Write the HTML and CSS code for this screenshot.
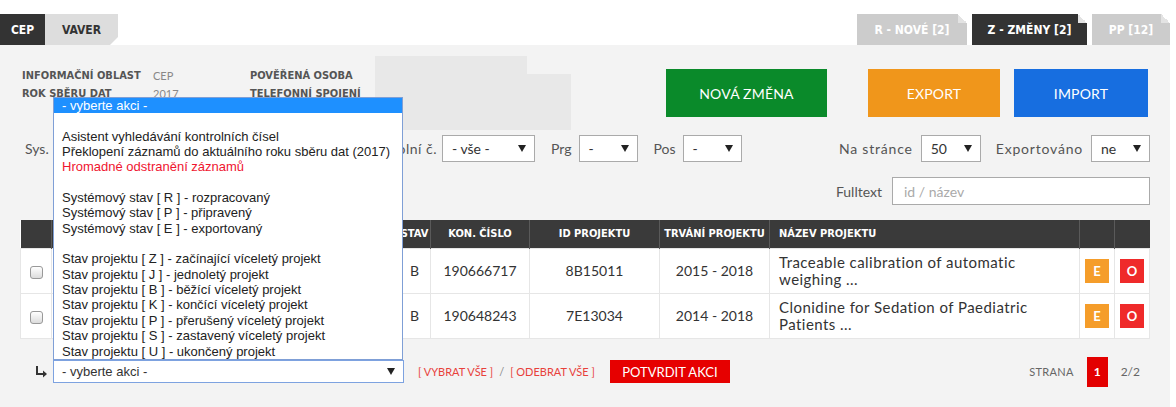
FILE: index.html
```html
<!DOCTYPE html>
<html lang="cs">
<head>
<meta charset="utf-8">
<title>CEP – změny</title>
<link rel="stylesheet" href="styles.css">
</head>
<body>
<div class="page">
  <div class="tabs">
    <div class="tabs-left">
      <div class="tab tab-cep">CEP</div>
      <div class="tab tab-vaver">VAVER</div>
    </div>
    <div class="tabs-right">
      <div class="ftab ftab-r">R - NOVÉ [2]</div>
      <div class="ftab ftab-active">Z - ZMĚNY [2]</div>
      <div class="ftab ftab-pp">PP [12]</div>
    </div>
  </div>

  <div class="panel">
    <div class="top">
      <div class="info">
        <span class="lbl">INFORMAČNÍ OBLAST</span><span class="val">CEP</span><span class="lbl">POVĚŘENÁ OSOBA</span>
        <span class="lbl">ROK SBĚRU DAT</span><span class="val">2017</span><span class="lbl">TELEFONNÍ SPOJENÍ</span>
      </div>
      <div class="redact"><div class="redact-a"></div><div class="redact-b"></div></div>
      <div class="actions">
        <div class="btn btn-green">NOVÁ ZMĚNA</div>
        <div class="btn btn-orange">EXPORT</div>
        <div class="btn btn-blue">IMPORT</div>
      </div>
    </div>

    <div class="filters">
      <div class="fl-left">
        <div class="sys-group"><span class="flabel">Sys.</span><div class="sel sel-sys"><i class="caret"></i></div></div>
        <div class="kc"><span class="flabel">Kontrolní č.</span></div>
        <div class="sel w93"><span>- vše -</span><i class="caret"></i></div>
        <span class="flabel ml16">Prg</span>
        <div class="sel w59"><span>-</span><i class="caret"></i></div>
        <span class="flabel ml16">Pos</span>
        <div class="sel w59"><span>-</span><i class="caret"></i></div>
      </div>
      <div class="fl-right">
        <span class="flabel wide">Na stránce</span>
        <div class="sel w60"><span>50</span><i class="caret"></i></div>
        <span class="flabel wide ml15">Exportováno</span>
        <div class="sel w59"><span>ne</span><i class="caret"></i></div>
      </div>
    </div>

    <div class="fulltext">
      <span class="flabel">Fulltext</span>
      <div class="input"><span class="ph">id / název</span></div>
    </div>

    <table class="grid">
      <colgroup>
        <col class="c-chk"><col class="c-h1"><col class="c-h2"><col class="c-stav"><col class="c-kon"><col class="c-id"><col class="c-tr"><col class="c-name"><col class="c-btn"><col class="c-btn">
      </colgroup>
      <thead>
        <tr>
          <th></th><th></th><th></th><th>STAV</th><th>KON. ČÍSLO</th><th>ID PROJEKTU</th><th>TRVÁNÍ PROJEKTU</th><th class="left">NÁZEV PROJEKTU</th><th></th><th></th>
        </tr>
      </thead>
      <tbody>
        <tr>
          <td><span class="chk"></span></td><td></td><td></td><td class="num">B</td><td class="num">190666717</td><td class="num">8B15011</td><td class="num">2015 - 2018</td>
          <td class="left name">Traceable calibration of automatic weighing ...</td>
          <td><span class="sq sq-e">E</span></td><td><span class="sq sq-o">O</span></td>
        </tr>
        <tr>
          <td><span class="chk"></span></td><td></td><td></td><td class="num">B</td><td class="num">190648243</td><td class="num">7E13034</td><td class="num">2014 - 2018</td>
          <td class="left name">Clonidine for Sedation of Paediatric Patients ...</td>
          <td><span class="sq sq-e">E</span></td><td><span class="sq sq-o">O</span></td>
        </tr>
      </tbody>
    </table>

    <div class="bottom">
      <svg class="hook" width="13" height="12" viewBox="0 0 13 12"><path d="M2 0 V8 H8" fill="none" stroke="#333" stroke-width="2"/><path d="M8 4.5 L12 8 L8 11.5 Z" fill="#333"/></svg>
      <div class="sel sel-action"><span>- vyberte akci -</span><i class="caret"></i></div>
      <span class="lnk">[ VYBRAT VŠE ]</span><span class="slash">/</span><span class="lnk">[ ODEBRAT VŠE ]</span>
      <div class="btn-confirm">POTVRDIT AKCI</div>
      <div class="pager">
        <span class="strana">STRANA</span>
        <span class="pg-cur">1</span>
        <span class="pg-tot">2/2</span>
      </div>
    </div>

    <ul class="dropdown">
      <li class="opt hl">- vyberte akci -</li>
      <li class="opt"></li>
      <li class="opt">Asistent vyhledávání kontrolních čísel</li>
      <li class="opt">Překlopení záznamů do aktuálního roku sběru dat (2017)</li>
      <li class="opt red">Hromadné odstranění záznamů</li>
      <li class="opt"></li>
      <li class="opt">Systémový stav [ R ] - rozpracovaný</li>
      <li class="opt">Systémový stav [ P ] - připravený</li>
      <li class="opt">Systémový stav [ E ] - exportovaný</li>
      <li class="opt"></li>
      <li class="opt">Stav projektu [ Z ] - začínající víceletý projekt</li>
      <li class="opt">Stav projektu [ J ] - jednoletý projekt</li>
      <li class="opt">Stav projektu [ B ] - běžící víceletý projekt</li>
      <li class="opt">Stav projektu [ K ] - končící víceletý projekt</li>
      <li class="opt">Stav projektu [ P ] - přerušený víceletý projekt</li>
      <li class="opt">Stav projektu [ S ] - zastavený víceletý projekt</li>
      <li class="opt">Stav projektu [ U ] - ukončený projekt</li>
    </ul>
  </div>
</div>
</body>
</html>
```

FILE: styles.css
```css
* { box-sizing: border-box; }
html, body { margin: 0; padding: 0; background: #fff; }
body {
  font-family: "Lato", "Open Sans", sans-serif;
  color: #333;
  width: 1176px;
  height: 407px;
  overflow: hidden;
}
.page { width: 1170px; }

/* tabs */
.tabs {
  height: 45px;
  display: flex;
  justify-content: space-between;
  align-items: flex-end;
}
.tabs-left, .tabs-right { display: flex; align-items: flex-end; }
.tab, .ftab {
  height: 31px;
  display: flex;
  align-items: center;
  justify-content: center;
  font-family: "DejaVu Sans Condensed", "Liberation Sans Narrow", "Roboto", sans-serif;
  font-weight: bold;
  font-size: 12px;
}
.tab-cep { width: 45px; background: #333; color: #fff; }
.tab-vaver {
  width: 73px;
  background: #ddd;
  color: #333;
  clip-path: polygon(0 0, 100% 0, 100% calc(100% - 8px), calc(100% - 8px) 100%, 0 100%);
}
.ftab {
  position: relative;
  background: #ccc;
  color: #fff;
  margin-left: 5px;
}
.ftab::after {
  content: "";
  position: absolute;
  top: 0;
  right: 0;
  width: 9px;
  height: 9px;
  background: linear-gradient(to bottom left, #fff 50%, #e3e3e3 50%);
}
.ftab-r { width: 110px; }
.ftab-active { width: 115px; background: #333; }
.ftab-pp { width: 78px; }

/* panel */
.panel {
  position: relative;
  background: #f3f3f3;
  height: 362px;
  padding: 0 20px;
}
.top { display: flex; height: 85px; }
.info {
  margin-top: 21px;
  margin-left: 2px;
  width: 353px;
  display: grid;
  grid-template-columns: 131px 97px 1fr;
  grid-auto-rows: 18px;
  align-items: center;
  font-size: 11px;
}
.lbl {
  font-family: "DejaVu Sans Condensed", "Liberation Sans Narrow", "Roboto", sans-serif;
  font-weight: bold;
  color: #555;
}
.val { color: #888; font-size: 11px; }
.redact { margin-top: 11px; }
.redact-a { width: 152px; height: 18px; background: #e8e8e8; }
.redact-b { width: 196px; height: 56px; background: #e8e8e8; }
.actions { margin-left: auto; margin-right: 2px; margin-top: 24px; display: flex; }
.btn {
  height: 48px;
  display: flex;
  align-items: center;
  justify-content: center;
  color: #fff;
  font-size: 14px;
  letter-spacing: 0.2px;
}
.btn-green { width: 161px; background: #0a8a2a; }
.btn-orange { width: 132px; background: #f0961b; margin-left: 41px; }
.btn-blue { width: 134px; background: #176ee0; margin-left: 14px; }

/* filters */
.filters {
  margin-top: 5px;
  height: 27px;
  display: flex;
  justify-content: space-between;
  align-items: center;
}
.fl-left, .fl-right { display: flex; align-items: center; }
.sys-group { width: 352px; display: flex; align-items: center; }
.sys-group .flabel { margin-left: 5px; }
.flabel { font-size: 14px; color: #555; margin-right: 7px; white-space: nowrap; }
.flabel.wide { letter-spacing: 0.8px; margin-right: 8px; }
.kc { width: 65px; margin-right: 5px; display: flex; justify-content: flex-end; }
.kc .flabel { margin-right: 0; letter-spacing: 0.5px; }
.ml16 { margin-left: 16px; }
.ml15 { margin-left: 15px; }
.sel {
  height: 27px;
  background: #fff;
  border: 1px solid #aaa;
  display: flex;
  align-items: center;
  justify-content: space-between;
  padding: 0 8px 0 9px;
  font-size: 14px;
  color: #333;
}
.caret {
  width: 0;
  height: 0;
  border-left: 4px solid transparent;
  border-right: 4px solid transparent;
  border-top: 7px solid #222;
}
.sel-sys { width: 120px; justify-content: flex-end; }
.w93 { width: 93px; }
.w59 { width: 59px; }
.w60 { width: 60px; }

.fulltext {
  margin-top: 15px;
  height: 28px;
  display: flex;
  justify-content: flex-end;
  align-items: center;
}
.fulltext .flabel { margin-right: 10px; }
.input {
  width: 258px;
  height: 28px;
  background: #fff;
  border: 1px solid #aaa;
  display: flex;
  align-items: center;
  padding-left: 11px;
  font-size: 14px;
}
.ph { color: #aaa; }

/* table */
.grid {
  margin-top: 15px;
  width: 1129px;
  table-layout: fixed;
  border-collapse: collapse;
  background: #fff;
}
.c-chk { width: 31px; }
.c-h1 { width: 100px; }
.c-h2 { width: 247px; }
.c-stav { width: 32px; }
.c-kon { width: 99px; }
.c-id { width: 130px; }
.c-tr { width: 110px; }
.c-name { width: 310px; }
.c-btn { width: 35px; }
.grid th {
  height: 28px;
  background: #3a3a3a;
  color: #fff;
  font-family: "DejaVu Sans Condensed", "Liberation Sans Narrow", "Roboto", sans-serif;
  font-weight: bold;
  font-size: 11px;
  border-left: 1px solid #5a5a5a;
  white-space: nowrap;
  overflow: hidden;
  padding: 0;
}
.grid th:first-child { border-left: none; }
.grid td {
  height: 45px;
  border: 1px solid #e6e6e6;
  text-align: center;
  font-size: 15px;
  color: #333;
  padding: 0;
  white-space: nowrap;
  overflow: hidden;
}
.grid td.num { font-size: 14px; }
.grid .left { text-align: left; padding-left: 9px; }
.grid td.name { white-space: normal; line-height: 17px; padding-right: 20px; letter-spacing: 0.45px; }
.chk {
  display: inline-block;
  width: 13px;
  height: 13px;
  border: 1px solid #999;
  border-radius: 3px;
  background: linear-gradient(#fff, #dcdcdc);
  vertical-align: middle;
}
.sq {
  display: inline-flex;
  width: 24px;
  height: 24px;
  align-items: center;
  justify-content: center;
  color: #fff;
  font-weight: bold;
  font-size: 13px;
  vertical-align: middle;
}
.sq-e { background: #f59d2a; }
.sq-o { background: #ef2a2a; }

/* bottom row */
.bottom {
  margin-top: 18px;
  height: 30px;
  display: flex;
  align-items: center;
}
.hook { margin-left: 15px; margin-right: 5px; }
.sel-action {
  width: 351px;
  height: 23px;
  border-color: #7da2e0;
  font-family: "Liberation Sans", Arial, sans-serif;
  font-size: 13px;
  padding-left: 8px;
}
.lnk { color: #e8413b; font-size: 11px; }
.bottom .lnk:first-of-type { margin-left: 14px; }
.slash { color: #888; font-size: 11px; margin: 0 6px; }
.btn-confirm {
  margin-left: 15px;
  width: 120px;
  height: 23px;
  background: #e60000;
  color: #fff;
  font-size: 13px;
  display: flex;
  align-items: center;
  justify-content: center;
}
.pager { margin-left: auto; margin-right: 10px; display: flex; align-items: center; height: 30px; }
.strana { font-size: 11px; color: #666; letter-spacing: 0.3px; }
.pg-cur {
  margin-left: 13px;
  width: 21px;
  height: 30px;
  background: #e30000;
  color: #fff;
  font-weight: bold;
  font-size: 12px;
  display: flex;
  align-items: center;
  justify-content: center;
}
.pg-tot { margin-left: 13px; font-size: 12px; color: #666; }

/* open select list */
.dropdown {
  position: absolute;
  left: 53px;
  top: 52px;
  width: 350px;
  height: 263px;
  margin: 0;
  padding: 0;
  list-style: none;
  background: #fff;
  border: 1px solid #7f9fd6;
  font-family: "Liberation Sans", Arial, sans-serif;
  font-size: 13px;
  color: #222;
}
.opt { height: 15.35px; line-height: 15.35px; padding-left: 8px; white-space: nowrap; }
.opt.hl { background: #1e90ff; color: #fff; }
.opt.red { color: #ef1530; }
```
